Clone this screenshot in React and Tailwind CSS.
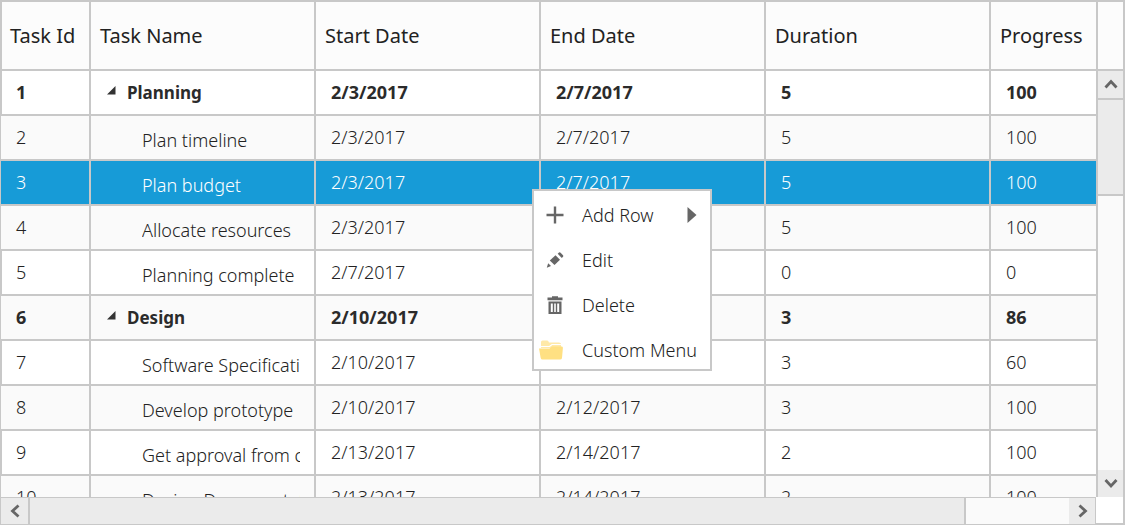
import React from "react";

const rows = [
  { id: 1, name: "Planning", start: "2/3/2017", end: "2/7/2017", duration: 5, progress: 100, parent: true },
  { id: 2, name: "Plan timeline", start: "2/3/2017", end: "2/7/2017", duration: 5, progress: 100 },
  { id: 3, name: "Plan budget", start: "2/3/2017", end: "2/7/2017", duration: 5, progress: 100, selected: true },
  { id: 4, name: "Allocate resources", start: "2/3/2017", end: "2/7/2017", duration: 5, progress: 100 },
  { id: 5, name: "Planning complete", start: "2/7/2017", end: "2/7/2017", duration: 0, progress: 0 },
  { id: 6, name: "Design", start: "2/10/2017", end: "2/14/2017", duration: 3, progress: 86, parent: true },
  { id: 7, name: "Software Specification", start: "2/10/2017", end: "2/12/2017", duration: 3, progress: 60 },
  { id: 8, name: "Develop prototype", start: "2/10/2017", end: "2/12/2017", duration: 3, progress: 100 },
  { id: 9, name: "Get approval from customer", start: "2/13/2017", end: "2/14/2017", duration: 2, progress: 100 },
  { id: 10, name: "Design Documentation", start: "2/13/2017", end: "2/14/2017", duration: 2, progress: 100 },
];

const headers = ["Task Id", "Task Name", "Start Date", "End Date", "Duration", "Progress"];

function Chevron({ d }) {
  return (
    <svg width="14" height="14" viewBox="0 0 14 14" fill="none" stroke="#666" strokeWidth="2.8" aria-hidden="true">
      <path d={d} />
    </svg>
  );
}

function Cell({ children }) {
  return <td className="h-[45px] border-r-2 border-b-2 border-[#c8c8c8] p-0 pb-[2px] pl-[15px] align-middle leading-6">{children}</td>;
}

function Row({ row, index }) {
  const tone = row.selected
    ? "bg-[#179bd7] text-white font-light"
    : row.parent
      ? "font-bold text-[#2b2b2b]"
      : "font-light text-[#222]";
  const stripe = row.selected ? "" : index % 2 ? "bg-[#fafafa]" : "bg-white";
  const edge = row.selected || index % 2 ? "border-l pl-[15px]" : "border-l-2 pl-[14px]";
  return (
    <tr className={`${tone} ${stripe}`}>
      <td className={`h-[45px] border-r-2 border-b-2 border-[#c8c8c8] pt-0 pr-0 pb-[2px] align-middle leading-6 ${edge}`}>{row.id}</td>
      <td className="h-[45px] border-r-2 border-b-2 border-[#c8c8c8] p-0 pr-[14px] align-middle">
        {row.parent ? (
          <div className="flex items-center pl-4 text-[17px] leading-6">
            <button type="button" aria-label={`Collapse ${row.name}`} className="mr-[11px] flex h-5 w-[9px] items-start pt-[3px]">
              <svg width="9" height="9" viewBox="0 0 9 9" aria-hidden="true">
                <path d="M8.500 0V8.500H0Z" fill="#333" />
              </svg>
            </button>
            {row.name}
          </div>
        ) : (
          <div className="ml-[51px] overflow-hidden pt-1 leading-6 whitespace-nowrap">{row.name}</div>
        )}
      </td>
      <Cell>{row.start}</Cell>
      <Cell>{row.end}</Cell>
      <Cell>{row.duration}</Cell>
      <Cell>{row.progress}</Cell>
    </tr>
  );
}

function PlusIcon() {
  return (
    <svg width="18" height="18" viewBox="0 0 18 18" stroke="#666" strokeWidth="2.400" aria-hidden="true">
      <path d="M9 0.500V17.500M0.500 9H17.500" />
    </svg>
  );
}

function PencilIcon() {
  return (
    <svg width="18" height="18" viewBox="0 0 18 18" fill="#666" aria-hidden="true">
      <path d="M9.500 4.200L14 8.700L8.500 14L3.800 9.500Z" />
      <path d="M11.700 2.800L13 1.500Q13.800 .9 14.600 1.700L17 4.200Q17.600 5 17 5.700L15.800 6.900Z" />
      <path d="M2.200 12.300L5 15.100L.8 16.700Z" />
    </svg>
  );
}

function TrashIcon() {
  return (
    <svg width="18" height="18" viewBox="0 0 18 18" fill="#666" aria-hidden="true">
      <path d="M1.500 1.500H6V.3H12V1.500H16.500V4.300H1.500Z" />
      <path fillRule="evenodd" d="M2.500 5.500H15.500V18H2.500ZM4.800 7.500V16H6.800V7.500ZM8.200 7.500V16H9.800V7.500ZM11.200 7.500V16H13.200V7.500Z" />
    </svg>
  );
}

function FolderIcon() {
  return (
    <svg width="26" height="22" viewBox="0 0 26 22" aria-hidden="true">
      <path d="M3 9V3Q3 1.500 4.500 1.500H9Q10 1.500 10.500 2.500L11 3.500H21Q23 3.500 23 5V9Z" fill="#ffe9a8" />
      <path d="M3 7.500H11.500L14 5.500H24" stroke="#fff" strokeWidth="1.200" fill="none" />
      <path d="M1 9.500H11.500L14 7.500H24Q25 7.500 24.900 9L24 19Q23.800 20.500 22 20.500H4.500Q3 20.500 2.700 19Z" fill="#ffe082" />
    </svg>
  );
}

const menu = [
  { label: "Add Row", icon: <PlusIcon />, sub: true },
  { label: "Edit", icon: <PencilIcon /> },
  { label: "Delete", icon: <TrashIcon /> },
  { label: "Custom Menu", icon: <FolderIcon />, wide: true },
];

function ContextMenu() {
  return (
    <div role="menu" className="absolute top-[187px] left-[532px] w-[180px] border-2 border-[#c8c8c8] bg-white pt-px text-[#222]">
      {menu.map((m) => (
        <button
          key={m.label}
          type="button"
          role="menuitem"
          className="flex h-[45px] w-full items-center font-light last:h-[42px] last:pt-[3px]"
        >
          <span className={m.wide ? "flex w-12 pl-1" : "flex w-12 pl-3"}>{m.icon}</span>
          <span className="flex-1 text-left leading-6 whitespace-nowrap">{m.label}</span>
          {m.sub && (
            <svg className="mr-[13px]" width="10" height="16" viewBox="0 0 10 16" fill="#666" aria-hidden="true">
              <path d="M.5 0L9.500 8L.5 16Z" />
            </svg>
          )}
        </button>
      ))}
    </div>
  );
}

export default function App() {
  return (
    <main className="relative flex h-screen flex-col overflow-hidden border-t-2 border-r-2 border-b border-[#c8c8c8] bg-white font-['Noto_Sans','Open_Sans',sans-serif] text-[18px]">
      <div className="flex min-h-0 flex-1">
        <div className="min-w-0 flex-1 overflow-hidden">
          <table className="w-full table-fixed border-separate border-spacing-0">
            <colgroup>
              <col className="w-[91px]" />
              <col className="w-[225px]" />
              <col className="w-[225px]" />
              <col className="w-[225px]" />
              <col className="w-[225px]" />
              <col />
            </colgroup>
            <thead>
              <tr className="bg-[#fcfcfc]">
                {headers.map((h) => (
                  <th
                    key={h}
                    scope="col"
                    className="h-[69px] border-r-2 border-b-2 border-[#c8c8c8] p-0 pl-[9px] text-left text-[20px] leading-7 font-normal whitespace-nowrap text-[#222] first:border-l-2 first:pl-2"
                  >
                    {h}
                  </th>
                ))}
              </tr>
            </thead>
            <tbody>
              {rows.map((r, i) => (
                <Row key={r.id} row={r} index={i} />
              ))}
            </tbody>
          </table>
        </div>
        <div className="flex w-[25px] flex-col bg-[#fafafa]">
          <div className="h-[69px] border-b-2 border-[#c8c8c8] bg-[#fcfcfc]" />
          <button type="button" aria-label="Scroll up" className="flex h-[27px] items-center justify-center bg-[#ebebeb]">
            <Chevron d="M1.500 9.500L7 3.500L12.500 9.500" />
          </button>
          <div className="h-[98px] border-y-2 border-[#c8c8c8] bg-[#ebebeb]" />
          <div className="flex-1" />
          <button type="button" aria-label="Scroll down" className="flex h-[27px] items-center justify-center bg-[#ebebeb]">
            <Chevron d="M1.500 3L7 9L12.500 3" />
          </button>
        </div>
      </div>
      <div className="flex h-[27px]">
        <div className="flex min-w-0 flex-1 border-t border-r border-l border-[#c8c8c8] bg-[#fafafa]">
          <button type="button" aria-label="Scroll left" className="flex w-[27px] items-center justify-center bg-[#ebebeb]">
            <Chevron d="M10.500 1.500L4.500 7L10.500 12.500" />
          </button>
          <div className="w-[938px] border-x-2 border-[#c8c8c8] bg-[#ebebeb]" />
          <div className="flex-1" />
          <button type="button" aria-label="Scroll right" className="flex w-[26px] items-center justify-center bg-[#ebebeb]">
            <Chevron d="M4.500 1.500L10.500 7L4.500 12.500" />
          </button>
        </div>
        <div className="w-[27px] border-b border-[#c8c8c8] bg-white" />
      </div>
      <ContextMenu />
    </main>
  );
}
